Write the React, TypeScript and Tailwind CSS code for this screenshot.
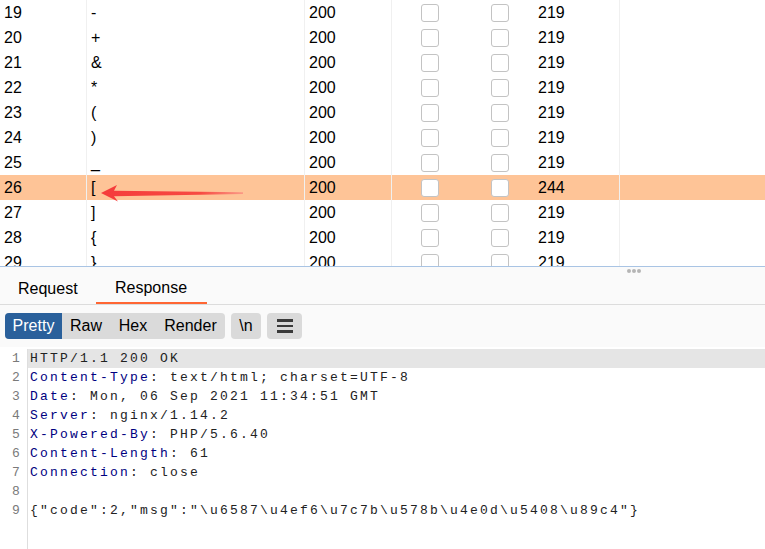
const rows = [
  { n: 19, p: "-", len: 219 },
  { n: 20, p: "+", len: 219 },
  { n: 21, p: "&", len: 219 },
  { n: 22, p: "*", len: 219 },
  { n: 23, p: "(", len: 219 },
  { n: 24, p: ")", len: 219 },
  { n: 25, p: "_", len: 219 },
  { n: 26, p: "[", len: 244, hl: true },
  { n: 27, p: "]", len: 219 },
  { n: 28, p: "{", len: 219 },
  { n: 29, p: "}", len: 219 },
];

const lines: { k?: string; v: string }[] = [
  { v: "HTTP/1.1 200 OK" },
  { k: "Content-Type", v: ": text/html; charset=UTF-8" },
  { k: "Date", v: ": Mon, 06 Sep 2021 11:34:51 GMT" },
  { k: "Server", v: ": nginx/1.14.2" },
  { k: "X-Powered-By", v: ": PHP/5.6.40" },
  { k: "Content-Length", v: ": 61" },
  { k: "Connection", v: ": close" },
  { v: "" },
  { v: '{"code":2,"msg":"\\u6587\\u4ef6\\u7c7b\\u578b\\u4e0d\\u5408\\u89c4"}' },
];

const Box = () => (
  <div className="w-[18px] h-[18px] rounded-[3px] border-[1.5px] border-[#c3c3c3] bg-white" />
);

const Arrow = () => (
  <svg className="absolute left-0 top-0 pointer-events-none" width="260" height="210">
    <defs>
      <linearGradient id="ag" x1="100" y1="0" x2="243" y2="0" gradientUnits="userSpaceOnUse">
        <stop offset="0" stopColor="#f53b3b" />
        <stop offset="0.7" stopColor="#f74a42" />
        <stop offset="1" stopColor="#fb9a86" />
      </linearGradient>
    </defs>
    <polygon
      points="101,193 117,185 114,190.8 243,192.2 243,194 114,196.2 118,201.5"
      fill="url(#ag)"
    />
  </svg>
);

export default function App() {
  return (
    <div className="w-[765px] h-[549px] flex flex-col overflow-hidden bg-white font-['Liberation_Sans',Arial,sans-serif] text-[16px] text-black">
      {/* results table */}
      <div className="relative h-[267px] shrink-0 overflow-hidden border-b border-[#a9c4e4]">
        {rows.map((r) => (
          <div key={r.n} className={`flex h-[25px] items-center ${r.hl ? "bg-[#fec497]" : "bg-white"}`}>
            <div className="w-[87px] h-full flex items-center pl-[4px] border-r border-[#f0f0f0]">{r.n}</div>
            <div className="w-[218px] h-full flex items-center pl-[4px] border-r border-[#f0f0f0]">{r.p}</div>
            <div className="w-[87px] h-full flex items-center pl-[4px] border-r border-[#f0f0f0]">200</div>
            <div className="w-[75px] h-full flex items-center justify-center">
              <Box />
            </div>
            <div className="w-[65px] h-full flex items-center justify-center">
              <Box />
            </div>
            <div className="w-[88px] h-full flex items-center pl-[6px] border-r border-[#f0f0f0]">{r.len}</div>
            <div className="flex-1" />
          </div>
        ))}
        <Arrow />
      </div>

      {/* tabs */}
      <div className="relative h-[38px] shrink-0 flex bg-[#fafafa] border-b border-[#dcdcdc]">
        <div className="absolute left-[627px] top-[2px] flex gap-[1px]">
          <span className="w-[4px] h-[4px] rounded-full bg-[#b5b5b5]" />
          <span className="w-[4px] h-[4px] rounded-full bg-[#b5b5b5]" />
          <span className="w-[4px] h-[4px] rounded-full bg-[#b5b5b5]" />
        </div>
        <div className="w-[96px] flex items-center pl-[18px] pt-[6px]">Request</div>
        <div className="w-[111px] flex items-center pl-[19px] pt-[6px] border-b-2 border-[#ff6633]">Response</div>
      </div>

      {/* toolbar */}
      <div className="h-[42px] shrink-0 flex items-start pt-[8px] pl-[5px] gap-[6px] bg-[#fafafa]">
        <div className="flex h-[26px] rounded-[4px] bg-[#dadada]">
          <div className="w-[57px] flex items-center justify-center rounded-l-[4px] bg-[#2a609b] text-white">Pretty</div>
          <div className="w-[48px] flex items-center justify-center">Raw</div>
          <div className="w-[46px] flex items-center justify-center">Hex</div>
          <div className="w-[69px] flex items-center justify-center">Render</div>
        </div>
        <div className="w-[30px] h-[26px] flex items-center justify-center rounded-[4px] bg-[#dadada]">\n</div>
        <div className="w-[35px] h-[26px] flex flex-col items-center justify-center gap-[3px] rounded-[4px] bg-[#dadada]">
          <span className="w-[16px] h-[2.5px] bg-[#3a3a3a]" />
          <span className="w-[16px] h-[2.5px] bg-[#3a3a3a]" />
          <span className="w-[16px] h-[2.5px] bg-[#3a3a3a]" />
        </div>
      </div>

      {/* code */}
      <div className="flex-1 flex pt-[2px] font-['Liberation_Mono','Courier_New',monospace] text-[13px] tracking-[2.2px] leading-[19px]">
        <div className="w-[28px] shrink-0 border-r border-[#dedede] text-right pr-[5px] text-[#7a7a7a]">
          {lines.map((_, i) => (
            <div key={i} className="h-[19px]">{i + 1}</div>
          ))}
        </div>
        <div className="flex-1 text-[#222]">
          {lines.map((l, i) => (
            <div key={i} className={`h-[19px] pl-[2px] whitespace-pre ${i === 0 ? "bg-[#e5e5e5]" : ""}`}>
              {l.k && <span className="text-[#000080]">{l.k}</span>}
              {l.v}
            </div>
          ))}
        </div>
      </div>
    </div>
  );
}
